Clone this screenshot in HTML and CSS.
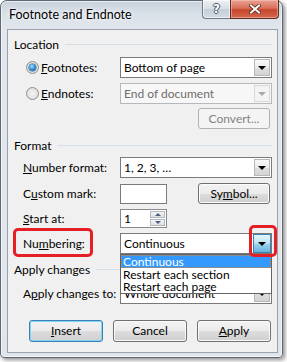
FILE: index.html
```html
<!DOCTYPE html>
<html>
<head>
<meta charset="utf-8">
<link rel="stylesheet" href="styles.css">
</head>
<body>
<div class="window">
  <div class="titlebar">
    <span class="title">Footnote and Endnote</span>
  </div>
  <div class="caption-btns">
    <div class="cbtn help"><span>?</span></div>
    <div class="cbtn close">
      <svg width="12" height="10" viewBox="0 0 12 10">
        <path d="M2 1.5 L10 8.5 M10 1.5 L2 8.5" stroke="#5a2418" stroke-width="3.6" stroke-linecap="square" fill="none"/>
        <path d="M2 1.5 L10 8.5 M10 1.5 L2 8.5" stroke="#fff" stroke-width="2" stroke-linecap="square" fill="none"/>
      </svg>
    </div>
  </div>
  <div class="client">
    <div class="group-head h-loc"><span>Location</span><i class="sep"></i></div>
    <div class="row radio-row r1">
      <span class="radio checked"></span><span class="label rlabel"><u>F</u>ootnotes:</span>
      <div class="combo"><span class="val">Bottom of page</span><span class="arrow"><i class="tri"></i></span></div>
    </div>
    <div class="row radio-row r2">
      <span class="radio"></span><span class="label rlabel"><u>E</u>ndnotes:</span>
      <div class="combo disabled"><span class="val">End of document</span><span class="arrow"><i class="tri"></i></span></div>
    </div>
    <div class="row btn-row r3">
      <div class="btn disabled small">Convert...</div>
    </div>
    <div class="group-head h-fmt"><span>Format</span><i class="sep"></i></div>
    <div class="row r4">
      <span class="label"><u>N</u>umber format:</span>
      <div class="combo"><span class="val">1, 2, 3, …</span><span class="arrow"><i class="tri"></i></span></div>
    </div>
    <div class="row r5">
      <span class="label">C<u>u</u>stom mark:</span>
      <div class="textbox"></div>
      <div class="btn small sym">Sy<u>m</u>bol...</div>
    </div>
    <div class="row r6">
      <span class="label"><u>S</u>tart at:</span>
      <div class="spinner"><span class="val">1</span>
        <span class="spins"><span class="spin up"><i></i></span><span class="spin down"><i></i></span></span>
      </div>
    </div>
    <div class="row r7">
      <span class="label">Nu<u>m</u>bering:</span>
      <div class="combo open"><span class="val">Continuous</span><span class="arrow hot"><i class="tri"></i></span>
        <div class="droplist">
          <div class="item sel">Continuous</div>
          <div class="item">Restart each section</div>
          <div class="item last">Restart each page</div>
        </div>
      </div>
    </div>
    <div class="group-head h-app"><span>Apply changes</span><i class="sep"></i></div>
    <div class="row r8">
      <span class="label">A<u>p</u>ply changes to:</span>
      <div class="combo"><span class="val">Whole document</span><span class="arrow"><i class="tri"></i></span></div>
    </div>
    <div class="buttons">
      <div class="btn default"><span><u>I</u>nsert</span></div>
      <div class="btn">Cancel</div>
      <div class="btn"><u>A</u>pply</div>
    </div>
  </div>
  <div class="hl hl-label"></div>
  <div class="hl hl-btn"></div>
</div>
</body>
</html>
```
FILE: styles.css
```css
* { box-sizing: border-box; margin: 0; padding: 0; }
html, body { width: 287px; height: 362px; overflow: hidden; background: #ffffff; }
body { font-family: Lato, "Noto Sans", sans-serif; font-size: 12px; color: #000; }
u { text-decoration: underline; text-underline-offset: 1px; }

.window {
  position: relative;
  width: 283px;
  height: 358px;
  border: 1px solid #5d6874;
  border-radius: 7px 7px 4px 4px;
  background: linear-gradient(#c9d2dd 0px, #d9e0e8 14px, #e2e7ed 30px, #e0e5eb 100%);
  box-shadow: 2px 2px 4px rgba(0,0,0,0.45), inset 0 0 0 1px rgba(255,255,255,0.6);
  display: flex;
  flex-direction: column;
  padding: 0 4px 4px 6px;
}
.titlebar { height: 28px; display: flex; align-items: center; padding-left: 2px; }
.title { line-height: 16px; font-size: 12.5px; text-shadow: 0 0 6px #fff, 0 0 3px #fff; }

.caption-btns { position: absolute; top: -1px; right: 3px; display: flex; }
.cbtn { height: 19px; display: flex; align-items: center; justify-content: center; }
.help {
  width: 28px;
  border: 1px solid #6f7a87;
  border-top: none;
  border-right: none;
  border-radius: 0 0 0 4px;
  background: linear-gradient(#eef1f5, #d7dee6 50%, #c5ced9 51%, #d4dbe4);
  box-shadow: inset 0 0 0 1px rgba(255,255,255,0.6);
}
.help span { font-family: "DejaVu Sans", sans-serif; font-weight: bold; font-size: 12px; color: #fff; line-height: 1; text-shadow: -1px 0 #4b5662, 1px 0 #4b5662, 0 -1px #4b5662, 0 1px #4b5662; }
.close {
  width: 49px;
  border: 1px solid #5e2c24;
  border-top: none;
  border-radius: 0 0 4px 0;
  background: linear-gradient(#e9a293, #d8705a 45%, #c6462c 55%, #d36a4d);
  box-shadow: inset 0 0 0 1px rgba(255,210,200,0.45);
}

.client {
  flex: 1;
  border: 1px solid #98a3ae;
  background: #f0f0f0;
  display: flex;
  flex-direction: column;
}

.group-head { height: 16px; display: flex; align-items: center; padding-left: 6px; padding-right: 5px; white-space: nowrap; }
.group-head .sep { flex: 1; height: 1px; background: #d5dde5; margin-left: 6px; }
.h-loc { margin-top: 6px; }
.h-fmt { margin-top: 8px; }
.h-app { margin-top: 7px; }

.row { height: 21px; display: flex; align-items: center; padding-left: 15px; white-space: nowrap; }
.row .label { width: 97px; flex: none; }
.radio-row { padding-left: 18px; }
.radio-row .label { width: 79px; }
.r1 { margin-top: 5px; }
.r2 { margin-top: 5px; }
.r3 { margin-top: 4px; }
.r4 { margin-top: 4px; }
.r5 { margin-top: 5px; }
.r6 { margin-top: 4px; }
.r7 { margin-top: 4px; }
.r8 { margin-top: 6px; }

.radio {
  width: 13px; height: 13px; border-radius: 50%;
  border: 1px solid #8e8f8f;
  background: radial-gradient(circle at 50% 50%, #f4f4f4 0, #e3e3e3 60%, #d0d0d0 100%);
  margin-right: 2px; flex: none;
  display: flex; align-items: center; justify-content: center;
}
.radio.checked::after {
  content: ""; width: 7px; height: 7px; border-radius: 50%;
  background: radial-gradient(circle at 40% 35%, #a6e3ff 0, #3c95d6 45%, #0d4f8f 100%);
  box-shadow: 0 0 0 0.5px #1b5e96;
}

.combo {
  position: relative;
  width: 152px; height: 21px;
  border: 1px solid #7a7a7a;
  background: #fff;
  display: flex; align-items: center;
  padding-left: 3px;
}
.combo .val { line-height: 16px; white-space: nowrap; }
.combo .arrow {
  position: absolute; right: 1px; top: 1px; bottom: 1px; width: 16px;
  border: 1px solid #b7b7b7;
  background: linear-gradient(#f8f8f8, #ececec 50%, #dedede 51%, #d4d4d4);
  display: flex; align-items: center; justify-content: center;
}
.tri { width: 0; height: 0; border-left: 4px solid transparent; border-right: 4px solid transparent; border-top: 4px solid #000; }
.combo .arrow.hot {
  top: 0; bottom: 0; right: 0; width: 18px;
  border: 1px solid #3c7fb1;
  background: linear-gradient(#e5f4fc, #c4e5f6 45%, #98d1ef 55%, #68b3db);
}
.combo.disabled { border-color: #b4b9be; background: #f7f7f7; }
.combo.disabled .val { color: #6d6d6d; }
.combo.disabled .arrow { border-color: #d9d9d9; background: #f4f4f4; }
.combo.disabled .tri { border-top-color: #a9a9a9; }

.droplist {
  position: absolute; left: -1px; top: 20px; width: 152px;
  border: 1px solid #646464;
  background: #fff;
  z-index: 5;
}
.item { height: 13px; line-height: 13px; padding-left: 2px; white-space: nowrap; }
.item.last { height: 12px; line-height: 12px; }
.item.sel { background: #3399ff; color: #fff; outline: 1px dotted #d9822b; outline-offset: -1px; }

.textbox { width: 47px; height: 20px; border: 1px solid #7a7a7a; background: #fff; }
.spinner {
  width: 47px; height: 19px; border: 1px solid #8a8a8a; background: #fff;
  display: flex; align-items: center; padding-left: 3px; position: relative;
}
.spins { position: absolute; right: 1px; top: 1px; bottom: 1px; width: 15px; display: flex; flex-direction: column; gap: 1px; }
.spin { flex: 1; border: 1px solid #b0b8c2; background: linear-gradient(#f6f6f6, #dedede); display: flex; align-items: center; justify-content: center; }
.spin.up i { width: 0; height: 0; border-left: 3px solid transparent; border-right: 3px solid transparent; border-bottom: 3px solid #4d6185; }
.spin.down i { width: 0; height: 0; border-left: 3px solid transparent; border-right: 3px solid transparent; border-top: 3px solid #4d6185; }

.btn-row { justify-content: flex-end; padding-right: 7px; }
.btn {
  width: 74px; height: 22px;
  border: 1px solid #707070; border-radius: 3px;
  background: linear-gradient(#f2f2f2, #ebebeb 50%, #dddddd 51%, #cfcfcf);
  box-shadow: inset 0 0 0 1px #fbfbfb;
  display: flex; align-items: center; justify-content: center;
  line-height: 16px;
}
.btn.small { width: 72px; height: 21px; }
.btn.sym { margin-left: 31px; }
.btn.disabled { border-color: #adb2b5; background: #f4f4f4; color: #838383; box-shadow: none; }
.btn.default { border-color: #3c7fb1; box-shadow: inset 0 0 0 1px #7fd5f5; }

.buttons { display: flex; gap: 10px; padding-left: 21px; margin-top: 16px; }

.hl { position: absolute; border: 3px solid #e41f26; border-radius: 5px; z-index: 10; }
.hl-label { left: 12px; top: 227px; width: 80px; height: 29px; }
.hl-btn { left: 248px; top: 224px; width: 28px; height: 32px; }
```
